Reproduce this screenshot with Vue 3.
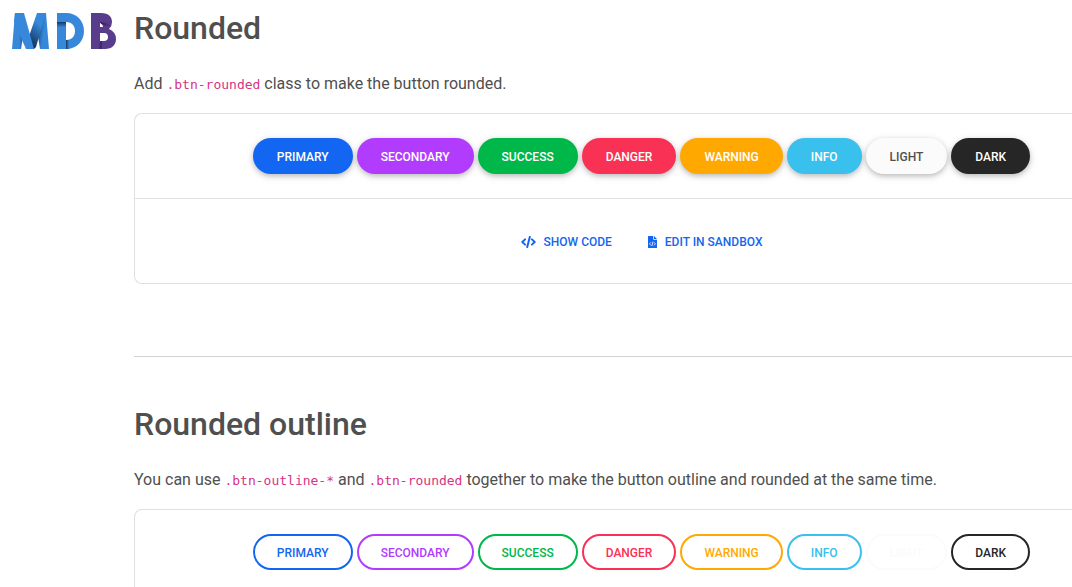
<template>
    <div class="page">
        <aside class="sidebar">
            <a href="#" class="sidebar__logo" aria-label="MDB">
                <svg viewBox="0 0 105 38" width="105" height="38" aria-hidden="true">
                    <defs>
                        <linearGradient id="leg-left" x1="0" y1="0" x2="1" y2="0">
                            <stop offset="0.55" stop-color="#3788db" />
                            <stop offset="1" stop-color="#123a63" />
                        </linearGradient>
                        <linearGradient id="diagonal" x1="0.8" y1="0" x2="0.3" y2="1">
                            <stop offset="0.3" stop-color="#3788db" />
                            <stop offset="1" stop-color="#0c2a49" />
                        </linearGradient>
                        <linearGradient id="leg-right" x1="0" y1="0.3" x2="1" y2="0.7">
                            <stop offset="0.1" stop-color="#15416e" />
                            <stop offset="0.6" stop-color="#3788db" />
                        </linearGradient>
                        <linearGradient id="bar" x1="0" y1="0.25" x2="0" y2="1">
                            <stop offset="0" stop-color="#123a63" />
                            <stop offset="0.2" stop-color="#3788db" />
                        </linearGradient>
                        <linearGradient id="bar-end" x1="0" y1="0" x2="1" y2="0">
                            <stop offset="0" stop-color="#123a63" />
                            <stop offset="1" stop-color="#3788db" />
                        </linearGradient>
                        <linearGradient id="b-fold" x1="0" y1="0" x2="1" y2="0">
                            <stop offset="0" stop-color="#2f1d4f" />
                            <stop offset="1" stop-color="#593d8c" />
                        </linearGradient>
                    </defs>
                    <path d="M3 1L13 12L9 37H0Z" fill="url(#leg-left)" />
                    <path d="M26 1H34L37 37H28L24 12Z" fill="url(#leg-right)" />
                    <path d="M25 1H34L24 35L22 37H15L14 33Z" fill="url(#diagonal)" />
                    <path d="M3 1H12L22 37H14L2 10Z" fill="#3788db" />
                    <path d="M45 1H54V37H45Z" fill="url(#bar)" />
                    <path d="M45 1H54C65 1 72 9 72 19S65 37 54 37V28C59 28 63 25 63 19S59 10 54 10H45Z" fill="#3788db" />
                    <path d="M54 28H57V37H54Z" fill="url(#bar-end)" />
                    <path
                        d="M79 1H89C97 1 100 5 100 10Q100 14 97 17Q104 20 104 27C104 33 100 37 93 37H79ZM88 11V15H91L90 11ZM88 21V29H92Q96 29 96 25T92 21Z"
                        fill="#593d8c"
                        fill-rule="evenodd"
                    />
                    <path d="M88 10Q93 10 99 13L97 15L89 12Z" fill="url(#b-fold)" />
                    <path d="M88 29H90V37H87Z" fill="#41296b" />
                </svg>
            </a>
        </aside>

        <main class="content">
            <section class="example">
                <h2 class="example__title">Rounded</h2>
                <p class="example__text">
                    Add <code>.btn-rounded</code> class to make the button rounded.
                </p>

                <div class="card">
                    <div class="card__row">
                        <button
                            v-for="color in colors"
                            :key="color"
                            type="button"
                            class="btn btn--solid"
                            :class="'btn--' + color"
                        >
                            {{ color }}
                        </button>
                    </div>
                    <div class="card__row card__row--actions">
                        <button type="button" class="btn btn--link">
                            <svg class="icon-code" viewBox="0 0 640 512" aria-hidden="true">
                                <path
                                    d="M375 40L265 472M175 145L55 256L175 367M465 145L585 256L465 367"
                                    fill="none"
                                    stroke="currentColor"
                                    stroke-width="84"
                                    stroke-linecap="round"
                                    stroke-linejoin="round"
                                />
                            </svg>
                            Show code
                        </button>
                        <button type="button" class="btn btn--link">
                            <svg class="icon-file" viewBox="0 0 384 512" aria-hidden="true">
                                <path
                                    d="M24 0H224V136Q224 160 248 160H384V488Q384 512 360 512H24Q0 512 0 488V24Q0 0 24 0ZM256 0L384 128H256Z"
                                    fill="currentColor"
                                />
                                <path
                                    d="M125 270L65 335L125 400M255 270L315 335L255 400M215 240L165 430"
                                    fill="none"
                                    stroke="#ffffff"
                                    stroke-width="34"
                                />
                            </svg>
                            Edit in sandbox
                        </button>
                    </div>
                </div>
            </section>

            <hr class="divider">

            <section class="example">
                <h2 class="example__title">Rounded outline</h2>
                <p class="example__text">
                    You can use <code>.btn-outline-*</code> and <code>.btn-rounded</code> together to make the button outline and rounded at the same time.
                </p>

                <div class="card">
                    <div class="card__row">
                        <button
                            v-for="color in colors"
                            :key="color"
                            type="button"
                            class="btn btn--outline"
                            :class="'btn--' + color"
                        >
                            {{ color }}
                        </button>
                    </div>
                </div>
            </section>
        </main>
    </div>
</template>

<script setup>
const colors = [
    'primary',
    'secondary',
    'success',
    'danger',
    'warning',
    'info',
    'light',
    'dark',
];
</script>

<style>
body {
    margin: 0;
    background: #ffffff;
}
</style>

<style scoped>
.page {
    display: flex;
    color: #4f4f4f;
    font-family: Roboto, "Liberation Sans", sans-serif;
    font-size: 16px;
    line-height: 26px;
}

.sidebar {
    flex: 0 0 134px;
}

.sidebar__logo {
    display: block;
    padding: 12px 0 0 12px;
}

.sidebar__logo svg {
    display: block;
}

.content {
    flex: 1;
    min-width: 0;
    padding-top: 9px;
}

.example__title {
    margin: 0 0 23px;
    font-size: 32px;
    font-weight: 500;
    line-height: 39px;
}

.example__text {
    margin: 0 0 15px;
}

.example__text code {
    color: #d63384;
    font-family: "DejaVu Sans Mono", monospace;
    font-size: 13px;
}

.card {
    border: 1px solid #e0e0e0;
    border-right: 0;
    border-radius: 8px 0 0 8px;
}

.card__row {
    display: flex;
    justify-content: center;
    gap: 4px;
    padding: 24px 24px 24px 100px;
}

.card__row--actions {
    border-top: 1px solid #e0e0e0;
}

.divider {
    height: 1px;
    margin: 72px 0 48px;
    border: 0;
    background: #d3d3d3;
}

.btn {
    padding: 10px 24px 8px;
    border: 0;
    border-radius: 18px;
    background: transparent;
    color: var(--color);
    font-family: inherit;
    font-size: 12px;
    font-weight: 500;
    line-height: 18px;
    text-transform: uppercase;
    cursor: pointer;
}

.btn--solid {
    background: var(--color);
    color: #ffffff;
    box-shadow: 0 2px 5px rgba(0, 0, 0, 0.2), 0 2px 10px rgba(0, 0, 0, 0.1);
}

.btn--outline {
    padding: 8px 22px 6px;
    border: 2px solid var(--color);
}

.btn--link {
    display: flex;
    align-items: center;
    gap: 8px;
    padding: 10px 16px 8px;
    color: #1266f1;
}

.icon-code {
    width: 15px;
    height: 12px;
}

.icon-file {
    width: 9px;
    height: 12px;
}

.btn--primary {
    --color: #1266f1;
}

.btn--secondary {
    --color: #b23cfd;
}

.btn--success {
    --color: #00b74a;
}

.btn--danger {
    --color: #f93154;
}

.btn--warning {
    --color: #ffa900;
}

.btn--info {
    --color: #39c0ed;
}

.btn--light {
    --color: #fbfbfb;
}

.btn--solid.btn--light {
    color: #4f4f4f;
}

.btn--dark {
    --color: #262626;
}
</style>
